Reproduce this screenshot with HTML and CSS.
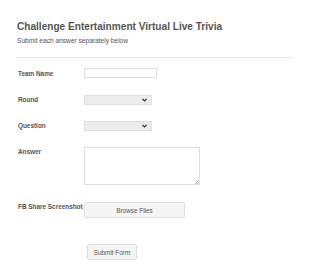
FILE: index.html
```html
<!DOCTYPE html>
<html>
<head>
<meta charset="utf-8">
<link rel="stylesheet" href="styles.css">
</head>
<body>
<div class="form">
  <div class="header">
    <h1 class="title">Challenge Entertainment Virtual Live Trivia</h1>
    <p class="subtitle">Submit each answer separately below</p>
  </div>
  <div class="row row-team">
    <label class="label">Team Name</label>
    <input class="input" type="text">
  </div>
  <div class="row row-round">
    <label class="label">Round</label>
    <div class="select"><span class="arrow"><svg width="5" height="4" viewBox="0 0 5 4"><path d="M0.5 1 L2.5 3 L4.5 1" fill="none" stroke="#333" stroke-width="1.2"/></svg></span></div>
  </div>
  <div class="row row-question">
    <label class="label">Question</label>
    <div class="select"><span class="arrow"><svg width="5" height="4" viewBox="0 0 5 4"><path d="M0.5 1 L2.5 3 L4.5 1" fill="none" stroke="#333" stroke-width="1.2"/></svg></span></div>
  </div>
  <div class="row row-answer">
    <label class="label">Answer</label>
    <div class="textarea"><svg class="grip" width="5" height="5" viewBox="0 0 5 5"><path d="M1 5 L5 1 M3 5 L5 3" stroke="#aaa" stroke-width="0.8"/></svg></div>
  </div>
  <div class="row row-upload">
    <label class="label">FB Share Screenshot</label>
    <div class="btn btn-browse">Browse Files</div>
  </div>
  <div class="row row-submit">
    <div class="btn btn-submit">Submit Form</div>
  </div>
</div>
</body>
</html>
```
FILE: styles.css
```css
html, body {
  margin: 0;
  padding: 0;
  background: #fff;
}
body {
  font-family: "Liberation Sans", Arial, sans-serif;
  color: #555;
}
.form {
  padding: 20px 17px 0 17px;
}
.header {
  border-bottom: 1px solid #eaeaea;
  padding-bottom: 12px;
}
.title {
  margin: 0;
  font-size: 10.1px;
  line-height: 13px;
  font-weight: bold;
  color: #555;
}
.subtitle {
  margin: 4px 0 0 0;
  font-size: 6.6px;
  line-height: 8px;
  color: #555;
}
.row {
  display: flex;
  align-items: flex-start;
  padding-left: 1px;
}
.label {
  width: 66px;
  flex: none;
  font-size: 6.4px;
  font-weight: bold;
  line-height: 8px;
  color: #555;
}
.row-team { margin-top: 10px; }
.row-team .label { margin-top: 2px; }
.input {
  box-sizing: border-box;
  width: 73px;
  height: 10px;
  margin: 0;
  padding: 0;
  border: 1px solid #ddd;
  background: #fff;
  outline: none;
}
.row-round { margin-top: 17px; }
.row-question { margin-top: 16px; }
.row-round .label, .row-question .label { margin-top: 1px; }
.select {
  box-sizing: border-box;
  width: 68px;
  height: 10px;
  border: 1px solid #e0e0e0;
  background: #ececec;
  position: relative;
}
.arrow {
  position: absolute;
  right: 4px;
  top: 2px;
  display: flex;
}
.row-answer { margin-top: 16px; }
.row-answer .label { margin-top: 1px; }
.textarea {
  box-sizing: border-box;
  width: 116px;
  height: 38px;
  border: 1px solid #ddd;
  background: #fff;
  position: relative;
}
.grip {
  position: absolute;
  right: 0;
  bottom: 0;
}
.row-upload { margin-top: 17px; }
.row-upload .label { margin-top: 1px; }
.btn {
  box-sizing: border-box;
  border: 1px solid #ddd;
  border-radius: 2px;
  background: #f5f5f5;
  font-size: 6.4px;
  color: #555;
  display: flex;
  align-items: center;
  justify-content: center;
}
.btn-browse {
  width: 101px;
  height: 16px;
}
.row-submit {
  margin-top: 26px;
  padding-left: 70px;
}
.btn-submit {
  width: 50px;
  height: 16px;
}
```
